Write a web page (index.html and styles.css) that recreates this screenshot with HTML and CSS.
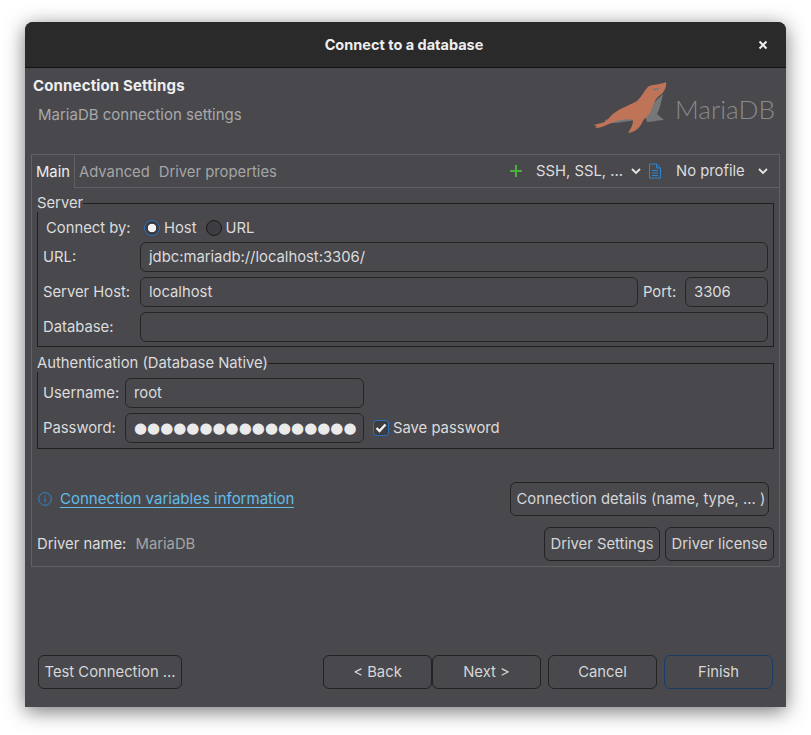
FILE: index.html
```html
<!DOCTYPE html>
<html lang="en">
<head>
  <meta charset="UTF-8" />
  <title>Connect to a database</title>
  <link rel="stylesheet" href="styles.css">
</head>
<body>
  <div class="window">
    <div class="titlebar">
      <span class="title">Connect to a database</span>
      <svg class="close" width="10" height="10" viewBox="0 0 10 10"><path d="M1.5 1.5l7 7M8.5 1.5l-7 7" stroke="#eee" stroke-width="2" fill="none"/></svg>
    </div>

    <div class="header">
      <div>
        <div class="header-title">Connection Settings</div>
        <div class="header-sub">MariaDB connection settings</div>
      </div>
      <div class="logo">
        <svg width="84" height="54" viewBox="0 0 84 54">
          <path d="M69 12C67 20 66 27 63 32L70 38C65 38 58 40 53 40L50 30Z" fill="#77777a"/>
          <path d="M11 38C22 35 36 35 48 34L50 37C38 38 22 42 12 41Z" fill="#77777a"/>
          <path d="M0 43C7 41 11 41 15 36C24 26 35 24 43 19C48 15 50 8 55 4C60 2 66 3 72 0C73 5 70 11 65 14C61 17 59 23 57 29C54 35 50 36 48 41C44 48 40 50 34 51C37 46 39 43 39 38C33 36 25 38 17 41C11 44 6 46 1 46C3 45 3 44 0 43Z" fill="#bf7458"/>
          <path d="M58 8C61 6 64 6 66 6C64 8 61 9 58 8Z" fill="#77777a"/>
        </svg>
        <span class="logo-text">MariaDB</span>
      </div>
    </div>

    <div class="folder">
      <div class="tabs">
        <div class="tab active">Main</div>
        <div class="tab">Advanced</div>
        <div class="tab">Driver properties</div>
        <div class="tools">
          <svg class="plus" width="14" height="14" viewBox="0 0 14 14"><path d="M7 1v12M1 7h12" stroke="#4caf3f" stroke-width="2" fill="none"/></svg>
          <span class="tool-text ssh">SSH, SSL, ...</span>
          <svg class="chev" width="12" height="8" viewBox="0 0 12 8"><path d="M2 2l4 4 4-4" stroke="#e6e6e6" stroke-width="1.8" fill="none"/></svg>
          <svg class="doc" width="14" height="16" viewBox="0 0 14 16"><path d="M1.5 1h7l4 4v10h-11zM8.500 1v4h4M4 7.500h6M4 10h6M4 12.500h6" stroke="#2f86cf" stroke-width="1" fill="none"/></svg>
          <span class="tool-text profile">No profile</span>
          <svg class="chev" width="12" height="8" viewBox="0 0 12 8"><path d="M2 2l4 4 4-4" stroke="#e6e6e6" stroke-width="1.8" fill="none"/></svg>
        </div>
      </div>

      <div class="panel">
        <fieldset class="group server">
          <legend>Server</legend>
          <div class="connect-by">
            <span class="connect-label">Connect by:</span>
            <span class="radio checked"></span><span class="radio-label">Host</span>
            <span class="radio"></span><span class="radio-label">URL</span>
          </div>
          <div class="form-grid">
            <label>URL:</label>
            <input class="field" value="jdbc:mariadb://localhost:3306/">
            <label>Server Host:</label>
            <div class="host-row">
              <input class="field host" value="localhost">
              <label>Port:</label>
              <input class="field port" value="3306">
            </div>
            <label>Database:</label>
            <input class="field" value="">
          </div>
        </fieldset>

        <fieldset class="group auth">
          <legend>Authentication (Database Native)</legend>
          <div class="auth-grid">
            <label>Username:</label>
            <input class="field" value="root">
            <span></span>
            <label>Password:</label>
            <input class="field secret" value="●●●●●●●●●●●●●●●●●">
            <div class="save">
              <span class="check">
                <svg width="12" height="10" viewBox="0 0 12 10"><path d="M1.500 5l3 3 6-6.500" stroke="#f2f2f2" stroke-width="2.400" fill="none"/></svg>
              </span>
              <span>Save password</span>
            </div>
          </div>
        </fieldset>

        <div class="info-row">
          <div class="info">
            <svg width="14" height="14" viewBox="0 0 14 14"><circle cx="7" cy="7" r="6.300" stroke="#2f86cf" fill="none"/><path d="M7 6v4.500M7 3.500v1.300" stroke="#2f86cf" fill="none"/></svg>
            <a class="link" href="#">Connection variables information</a>
          </div>
          <button class="btn details">Connection details (name, type, ... )</button>
        </div>

        <div class="driver-row">
          <div class="driver-name">
            <span>Driver name:</span>
            <span class="muted">MariaDB</span>
          </div>
          <div class="driver-btns">
            <button class="btn">Driver Settings</button>
            <button class="btn">Driver license</button>
          </div>
        </div>
      </div>
    </div>

    <div class="footer">
      <button class="btn test">Test Connection ...</button>
      <div class="nav">
        <button class="btn wide">&lt; Back</button>
        <button class="btn wide">Next &gt;</button>
        <button class="btn wide cancel">Cancel</button>
        <button class="btn wide finish">Finish</button>
      </div>
    </div>
  </div>
</body>
</html>
```

FILE: styles.css
```css
* {
  box-sizing: border-box;
}

html, body {
  height: 735px;
}

body {
  margin: 0;
  padding: 22px 0 0 25px;
  background: #fff;
  font-family: Inter, 'Noto Sans', sans-serif;
  font-size: 14.8px;
  color: #dcdcdc;
}

.window {
  display: flex;
  flex-direction: column;
  width: 761px;
  height: 685px;
  background: #48484d;
  border-radius: 8px 8px 0 0;
  box-shadow: 0 4px 20px rgba(0,0,0,0.55);
}

.titlebar {
  position: relative;
  flex: none;
  height: 46px;
  background: #2a2a2a;
  border-bottom: 1px solid #111;
  border-radius: 8px 8px 0 0;
  text-align: center;
  line-height: 45px;
}

.title {
  margin-left: -3px;
  font-size: 14.5px;
  font-weight: 700;
  color: #eee;
}

.close {
  position: absolute;
  right: 18px;
  top: 18px;
}

.header {
  display: flex;
  flex: none;
  justify-content: space-between;
  height: 86px;
  padding: 9px 11px 0 8px;
}

.header-title {
  font-size: 15px;
  font-weight: 700;
  letter-spacing: 0.15px;
  line-height: 18px;
  color: #eee;
}

.header-sub {
  margin: 11px 0 0 5px;
  font-size: 15px;
  line-height: 18px;
  color: #a9a9a9;
}

.logo {
  display: flex;
  align-items: flex-start;
  margin-top: 5px;
}

.logo-text {
  margin: 10px 0 0 -3px;
  font-family: Lato, sans-serif;
  font-weight: 300;
  font-size: 26.2px;
  line-height: 34px;
  color: #8a8a8a;
}

.folder {
  flex: none;
  margin: 0 6px;
  border: 1px solid #616165;
}

.tabs {
  display: flex;
  height: 33px;
  line-height: 34px;
}

.tab {
  padding: 0 5px 0 4px;
  color: #a5a5a5;
  border-bottom: 1px solid #616165;
}

.tab.active {
  width: 43px;
  color: #eee;
  border-bottom: none;
  border-right: 1px solid #616165;
}

.tools {
  display: flex;
  flex: 1;
  align-items: center;
  justify-content: flex-end;
  padding-right: 10px;
  border-bottom: 1px solid #616165;
}

.tool-text {
  color: #dcdcdc;
}

.plus {
  margin-right: 13px;
}

.ssh {
  width: 94px;
}

.doc {
  margin: 0 14px 0 6px;
}

.profile {
  width: 81px;
}

.panel {
  padding: 6px 5px 5px 5px;
}

.group {
  margin: 0;
  padding: 0 5px 4px 5px;
  border: 1px solid #1f1f1f;
}

.group legend {
  padding: 0;
  margin-left: -6px;
  line-height: 18px;
}

.auth {
  margin-top: 7px;
  padding-top: 6px;
  padding-bottom: 5px;
}

.connect-by {
  display: flex;
  align-items: center;
  height: 20px;
  margin: 6px 0 4px 3px;
}

.connect-label {
  width: 98px;
}

.radio {
  width: 16px;
  height: 16px;
  margin-right: 4px;
  border: 1.500px solid #1a1a1a;
  border-radius: 50%;
  background: #3d3d41;
}

.radio.checked {
  border-color: #2a6fc0;
  background: radial-gradient(circle, #f2f2f2 0 4px, #3d3d41 4.500px);
}

.radio-label {
  margin-right: 9px;
}

.form-grid {
  display: grid;
  grid-template-columns: 97px 1fr;
  align-items: center;
  row-gap: 5px;
}

.host-row {
  display: flex;
  align-items: center;
}

.field {
  width: 100%;
  height: 30px;
  padding: 0 8px;
  background: transparent;
  border: 1px solid #262626;
  border-radius: 6px;
  font: inherit;
  color: #dcdcdc;
  outline: none;
}

.field.host {
  width: 498px;
  margin-right: 5px;
}

.field.port {
  width: 83px;
  margin-left: auto;
}

.auth-grid {
  display: grid;
  grid-template-columns: 82px 239px 1fr;
  align-items: center;
  row-gap: 5px;
}

.field.secret {
  padding: 0 0 0 8px;
  font-family: 'DejaVu Sans', sans-serif;
  font-size: 15px;
  color: #eaeaea;
}

.save {
  display: flex;
  align-items: center;
  margin-left: 9px;
}

.check {
  display: flex;
  align-items: center;
  justify-content: center;
  width: 16px;
  height: 16px;
  margin-right: 4px;
  border: 1px solid #2a6fc0;
  border-radius: 3px;
  background: #3d3d41;
}

.info-row {
  display: flex;
  justify-content: space-between;
  align-items: center;
  margin: 33px 5px 0 1px;
}

.info {
  display: flex;
  align-items: center;
}

.link {
  margin-left: 8px;
  font-size: 15px;
  color: #63bce8;
  text-decoration: none;
  border-bottom: 1.500px solid #63bce8;
  line-height: 17px;
}

.driver-row {
  display: flex;
  justify-content: space-between;
  align-items: center;
  margin-top: 11px;
}

.driver-name .muted {
  margin-left: 5px;
  color: #a5a5a5;
}

.driver-btns {
  display: flex;
  gap: 5px;
}

.btn {
  height: 34px;
  padding: 0 5.500px;
  background: transparent;
  border: 1px solid #232323;
  border-radius: 6px;
  font: inherit;
  color: #d6d6d6;
  white-space: nowrap;
}

.details {
  width: 259px;
}

.footer {
  display: flex;
  justify-content: space-between;
  margin-top: auto;
  padding: 0 13px 18px 13px;
}

.test {
  width: 144px;
}

.nav {
  display: flex;
}

.wide {
  width: 109px;
}

.cancel {
  margin: 0 7px;
}

.finish {
  border-color: #1b3c66;
}
```
